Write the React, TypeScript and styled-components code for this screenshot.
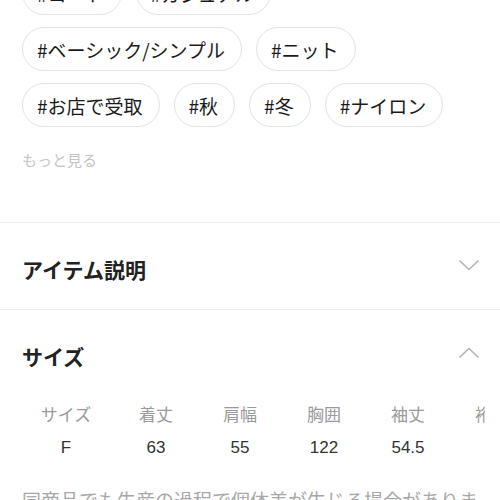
import React from "react";
import styled, { createGlobalStyle } from "styled-components";

const GlobalStyle = createGlobalStyle`
  html, body {
    margin: 0;
    padding: 0;
    background: #ffffff;
  }
  body {
    font-family: "Noto Sans CJK JP", "Noto Sans", sans-serif;
    color: #222222;
    overflow: hidden;
  }
`;

const Page = styled.div`
  width: 500px;
  height: 500px;
  overflow: hidden;
  background: #ffffff;
`;

const TagSection = styled.section`
  margin-top: -29px;
  padding: 0 22px 50px;
`;

const TagList = styled.div`
  display: flex;
  flex-wrap: wrap;
  gap: 12px 14px;
`;

const Tag = styled.span`
  display: inline-flex;
  align-items: center;
  height: 44px;
  box-sizing: border-box;
  padding: 0 16px 0 14px;
  border: 1px solid #e3e3e3;
  border-radius: 22px;
  font-size: 19px;
  line-height: 1;
  color: #1a1a1a;
  white-space: nowrap;
`;

const MoreLink = styled.div`
  margin-top: 22px;
  font-size: 15px;
  line-height: 1.5;
  color: #c4c4c4;
`;

const Accordion = styled.section`
  border-top: 1px solid #efefef;
`;

const AccordionHeader = styled.div`
  display: flex;
  align-items: center;
  justify-content: space-between;
  height: 86px;
  padding: 0 21px 0 22px;
`;

const AccordionTitle = styled.h2`
  margin: 0;
  padding-top: 8px;
  font-size: 21px;
  font-weight: 700;
  line-height: 1.4;
  color: #222222;
`;

const SizeTable = styled.div`
  margin-left: 18px;
  width: 467px;
  overflow: hidden;
`;

const TableRow = styled.div<{ $head?: boolean }>`
  display: grid;
  grid-template-columns: 96px repeat(5, 84px);
  height: 35px;
  align-items: center;
  font-size: 17px;
  color: ${(p) => (p.$head ? "#9a9a9a" : "#333333")};
  font-family: ${(p) =>
    p.$head
      ? `"Noto Sans CJK JP", sans-serif`
      : `"Liberation Sans", "Noto Sans CJK JP", sans-serif`};
`;

const Cell = styled.span`
  text-align: center;
  white-space: nowrap;
`;

const Note = styled.p`
  margin: 20px 0 0;
  padding: 0 22px;
  font-size: 19px;
  line-height: 1.5;
  color: #a8a8a8;
`;

const Chevron = ({ up }: { up?: boolean }) => (
  <svg width="20" height="11" viewBox="0 0 20 11" fill="none">
    <polyline
      points={up ? "1,10 10,1.5 19,10" : "1,1 10,9.5 19,1"}
      stroke="#b3b3b3"
      strokeWidth="1.6"
      strokeLinecap="round"
      strokeLinejoin="round"
    />
  </svg>
);

const tags = [
  "#コート",
  "#カジュアル",
  "#ベーシック/シンプル",
  "#ニット",
  "#お店で受取",
  "#秋",
  "#冬",
  "#ナイロン",
];

const heads = ["サイズ", "着丈", "肩幅", "胸囲", "袖丈", "裄丈"];
const values = ["F", "63", "55", "122", "54.5", ""];

export default function App() {
  return (
    <Page>
      <GlobalStyle />
      <TagSection>
        <TagList>
          {tags.map((t) => (
            <Tag key={t}>{t}</Tag>
          ))}
        </TagList>
        <MoreLink>もっと見る</MoreLink>
      </TagSection>

      <Accordion>
        <AccordionHeader>
          <AccordionTitle>アイテム説明</AccordionTitle>
          <Chevron />
        </AccordionHeader>
      </Accordion>

      <Accordion>
        <AccordionHeader>
          <AccordionTitle>サイズ</AccordionTitle>
          <Chevron up />
        </AccordionHeader>
        <SizeTable>
          <TableRow $head>
            {heads.map((h) => (
              <Cell key={h}>{h}</Cell>
            ))}
          </TableRow>
          <TableRow>
            {values.map((v, i) => (
              <Cell key={i}>{v}</Cell>
            ))}
          </TableRow>
        </SizeTable>
        <Note>
          同商品でも生産の過程で個体差が生じる場合がありますので、あらかじめご了承ください。
        </Note>
      </Accordion>
    </Page>
  );
}
